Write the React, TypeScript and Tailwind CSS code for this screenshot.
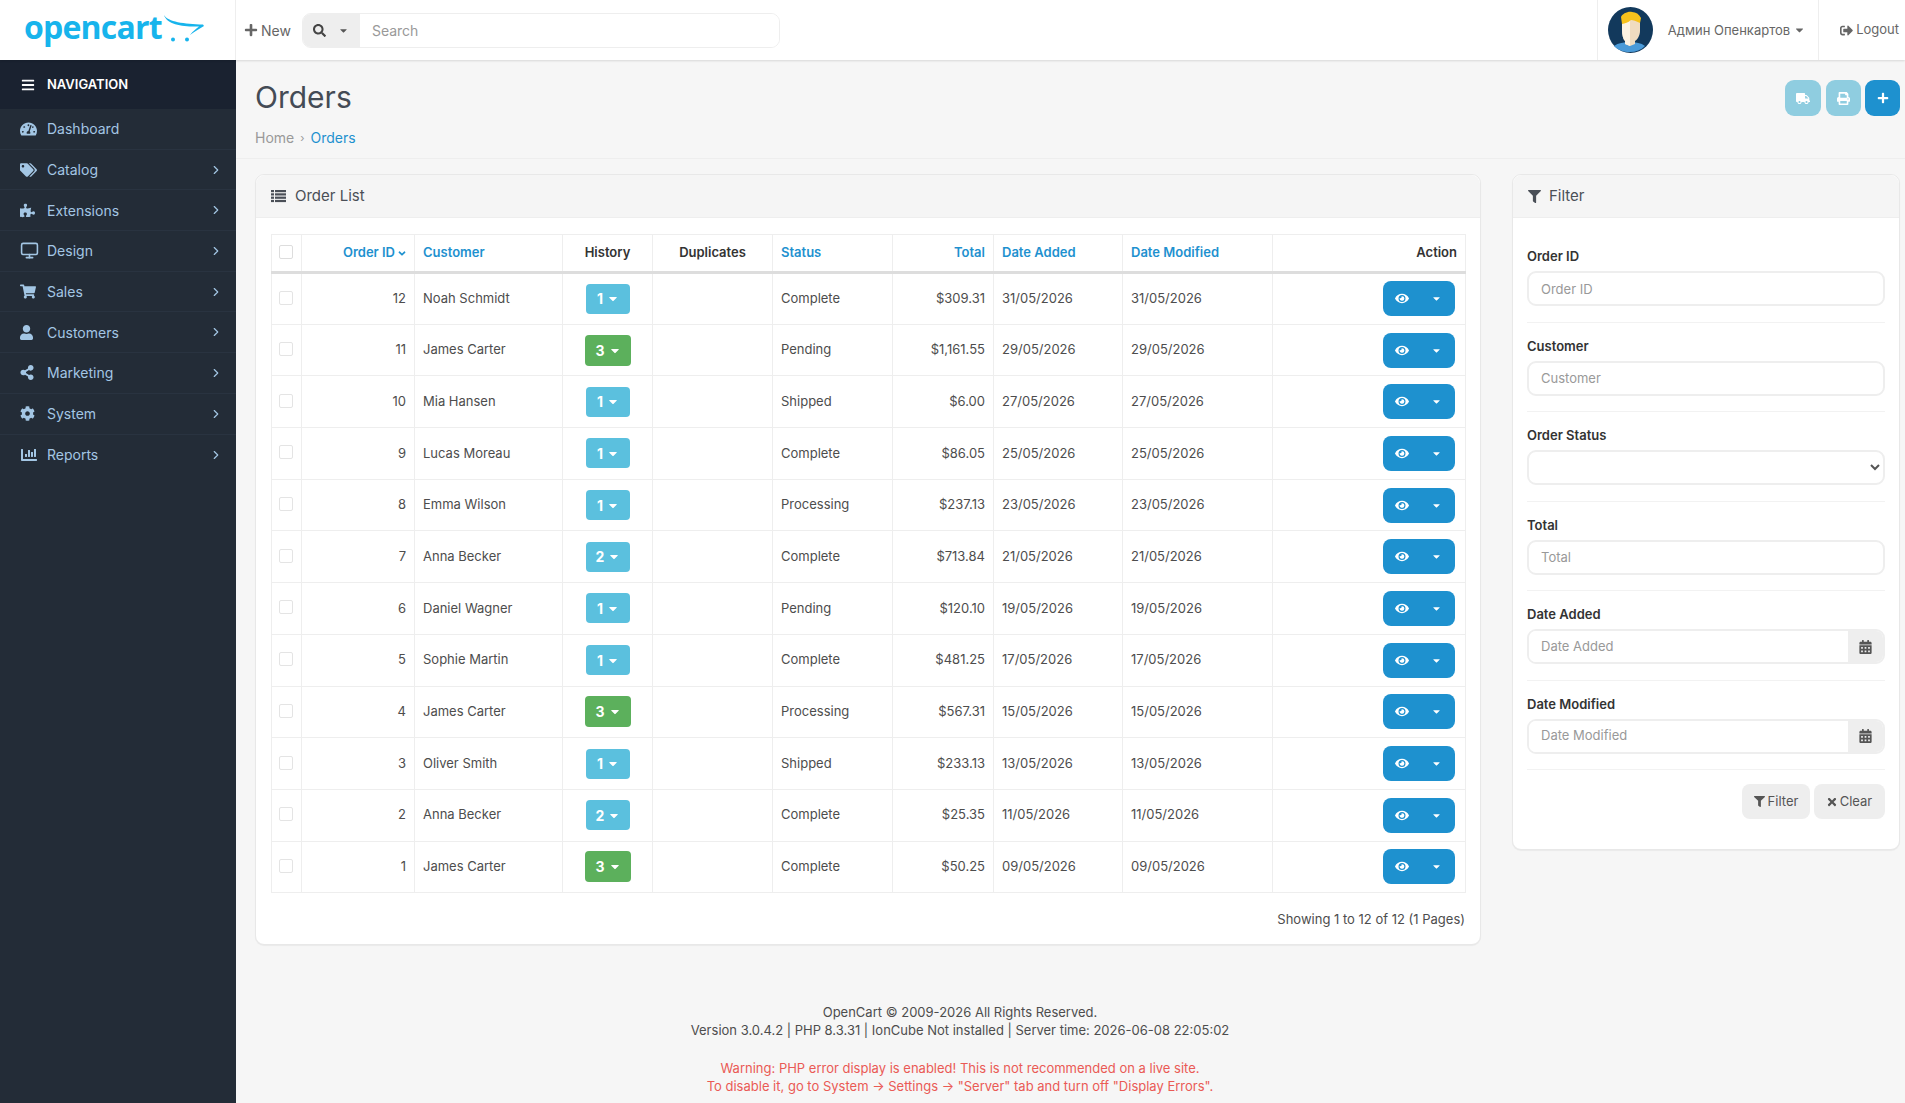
import { ChevronRight, Monitor } from 'lucide-react'
import {
  FaAngleDown,
  FaBars,
  FaCalendarAlt,
  FaCaretDown,
  FaChartBar,
  FaCog,
  FaEye,
  FaFilter,
  FaPlus,
  FaPrint,
  FaPuzzlePiece,
  FaSearch,
  FaShareAlt,
  FaShoppingCart,
  FaSignOutAlt,
  FaTachometerAlt,
  FaTags,
  FaTimes,
  FaTruck,
  FaUser,
} from 'react-icons/fa'

const navItems = [
  { label: 'Dashboard', icon: <FaTachometerAlt className="h-[16px] w-[17px]" />, arrow: false },
  { label: 'Catalog', icon: <FaTags className="h-[16px] w-[17px]" />, arrow: true },
  { label: 'Extensions', icon: <FaPuzzlePiece className="h-[15px] w-[15px]" />, arrow: true },
  { label: 'Design', icon: <Monitor className="h-[19px] w-[19px]" strokeWidth={2} />, arrow: true },
  { label: 'Sales', icon: <FaShoppingCart className="h-[15px] w-[16px]" />, arrow: true },
  { label: 'Customers', icon: <FaUser className="h-[15px] w-[13px]" />, arrow: true },
  { label: 'Marketing', icon: <FaShareAlt className="h-[15px] w-[14px]" />, arrow: true },
  { label: 'System', icon: <FaCog className="h-[15px] w-[15px]" />, arrow: true },
  { label: 'Reports', icon: <FaChartBar className="h-[16px] w-[18px]" />, arrow: true },
]

const orders = [
  { id: 12, customer: 'Noah Schmidt', history: 1, status: 'Complete', total: '$309.31', date: '31/05/2026' },
  { id: 11, customer: 'James Carter', history: 3, status: 'Pending', total: '$1,161.55', date: '29/05/2026' },
  { id: 10, customer: 'Mia Hansen', history: 1, status: 'Shipped', total: '$6.00', date: '27/05/2026' },
  { id: 9, customer: 'Lucas Moreau', history: 1, status: 'Complete', total: '$86.05', date: '25/05/2026' },
  { id: 8, customer: 'Emma Wilson', history: 1, status: 'Processing', total: '$237.13', date: '23/05/2026' },
  { id: 7, customer: 'Anna Becker', history: 2, status: 'Complete', total: '$713.84', date: '21/05/2026' },
  { id: 6, customer: 'Daniel Wagner', history: 1, status: 'Pending', total: '$120.10', date: '19/05/2026' },
  { id: 5, customer: 'Sophie Martin', history: 1, status: 'Complete', total: '$481.25', date: '17/05/2026' },
  { id: 4, customer: 'James Carter', history: 3, status: 'Processing', total: '$567.31', date: '15/05/2026' },
  { id: 3, customer: 'Oliver Smith', history: 1, status: 'Shipped', total: '$233.13', date: '13/05/2026' },
  { id: 2, customer: 'Anna Becker', history: 2, status: 'Complete', total: '$25.35', date: '11/05/2026' },
  { id: 1, customer: 'James Carter', history: 3, status: 'Complete', total: '$50.25', date: '09/05/2026' },
]

const filters = [
  { label: 'Order ID', type: 'text' },
  { label: 'Customer', type: 'text' },
  { label: 'Order Status', type: 'select' },
  { label: 'Total', type: 'text' },
  { label: 'Date Added', type: 'date' },
  { label: 'Date Modified', type: 'date' },
]

function ListIcon() {
  return (
    <svg width="15" height="14" viewBox="0 0 15 14" fill="currentColor" className="shrink-0">
      <rect x="0" y="1" width="3" height="2.2" />
      <rect x="4" y="1" width="11" height="2.2" />
      <rect x="0" y="4.3" width="3" height="2.2" />
      <rect x="4" y="4.3" width="11" height="2.2" />
      <rect x="0" y="7.6" width="3" height="2.2" />
      <rect x="4" y="7.6" width="11" height="2.2" />
      <rect x="0" y="10.9" width="3" height="2.2" />
      <rect x="4" y="10.9" width="11" height="2.2" />
    </svg>
  )
}

function Logo() {
  return (
    <div className="flex h-full w-[236px] shrink-0 items-start border-r border-[#eeeeee] pl-[24px]">
      <span className="mt-[5px] w-[138px] text-[32px] leading-[44px] font-bold tracking-[-0.8px] text-[#17b4ec] [font-family:'Open_Sans',sans-serif]">
        opencart
      </span>
      <svg className="mt-[14px] shrink-0" width="44" height="30" viewBox="0 0 44 30">
        <path d="M2 1 C 6 8, 22 10, 41 10.5 L 42 12 C 37 15, 32 18, 28 21 C 31 17, 34 15, 37 12.5 C 22 13, 5 11, 2 1 Z" fill="#17b4ec" />
        <circle cx="11" cy="25.5" r="2" fill="#17b4ec" />
        <circle cx="25" cy="25.5" r="2" fill="#17b4ec" />
      </svg>
    </div>
  )
}

function Avatar() {
  return (
    <svg width="45" height="46" viewBox="0 0 45 46" className="shrink-0">
      <ellipse cx="22.5" cy="23" rx="22.5" ry="23" fill="#12395c" />
      <path d="M6 39 C 10 36, 16 35, 22 35 C 28 35, 33 36, 37 39 C 33 43, 28 45, 22 45 C 15 45, 10 43, 6 39 Z" fill="#4a9ad8" />
      <path d="M14 12 L 32 12 L 32 24 C 32 29, 29 33, 27 34 L 27 37 L 22 39 L 17 37 L 17 34 C 15 32, 14 28, 14 22 Z" fill="#f0dcc0" />
      <path d="M14 12 L 22 12 L 22 39 L 17 37 L 17 34 C 15 32, 14 28, 14 22 Z" fill="#fcf3e4" />
      <path d="M13 10 C 14 7, 20 4, 24 5 C 28 5, 31 7, 33 11 L 32 16 C 28 14, 25 13, 23 13 C 20 16, 17 16, 14 17 Z" fill="#f6c21c" />
    </svg>
  )
}

function Header() {
  return (
    <header className="z-10 flex h-[60px] shrink-0 items-stretch bg-white shadow-[0_1px_2px_rgba(0,0,0,0.12)]">
      <Logo />
      <div className="flex items-center pl-[8px]">
        <FaPlus className="h-[14px] w-[14px] text-[#666666]" />
        <span className="ml-[3px] text-[14px] text-[#666666]">New</span>
      </div>
      <div className="mt-[13px] ml-[11px] flex h-[35px] w-[478px] overflow-hidden rounded-[9px] border border-[#eeeeee]">
        <div className="flex w-[57px] items-center bg-[#eeeeee] pl-[10px] text-[#444444]">
          <FaSearch className="h-[13px] w-[13px]" />
          <FaCaretDown className="ml-[13px] h-[11px] w-[9px] text-[#555555]" />
        </div>
        <input placeholder="Search" className="min-w-0 flex-1 bg-white pl-[12px] text-[14px] outline-none placeholder:text-[#999999]" />
      </div>
      <div className="ml-auto flex items-center border-l border-[#eeeeee] pr-[14px] pl-[10px]">
        <Avatar />
        <span className="mt-[1px] ml-[15px] text-[13px] text-[#666666]">Админ Опенкартов</span>
        <FaCaretDown className="ml-[5px] h-[12px] w-[9px] text-[#666666]" />
      </div>
      <div className="flex items-center border-l border-[#eeeeee] pr-[6px] pl-[21px] text-[#666666]">
        <FaSignOutAlt className="h-[13px] w-[13px]" />
        <span className="ml-[3px] text-[13px]">Logout</span>
      </div>
    </header>
  )
}

function Sidebar() {
  return (
    <nav className="w-[236px] shrink-0 bg-[#232c37]">
      <div className="flex h-[49px] items-center bg-[#1a2230] pl-[21px] text-white">
        <FaBars className="h-[14px] w-[14px]" />
        <span className="ml-[12px] text-[13px] font-semibold">NAVIGATION</span>
      </div>
      {navItems.map((item) => (
        <div key={item.label} className="flex h-[40.7px] items-center border-b border-[#293340] pr-[13px] text-[#a3c6e4] last:border-b-0">
          <span className="flex w-[47px] justify-start pl-[20px]">{item.icon}</span>
          <span className="text-[14px]">{item.label}</span>
          {item.arrow && <ChevronRight className="ml-auto h-[14px] w-[14px]" strokeWidth={2} />}
        </div>
      ))}
    </nav>
  )
}

function OrderTable() {
  const th = 'border border-[#eeeeee] px-[8px] text-[13px] font-semibold'
  const td = 'border border-[#eeeeee] px-[8px] text-[13px] text-[#4d4d4d]'
  return (
    <table className="w-[1194px] table-fixed border-collapse">
      <colgroup>
        <col className="w-[30px]" />
        <col className="w-[113px]" />
        <col className="w-[148px]" />
        <col className="w-[90px]" />
        <col className="w-[120px]" />
        <col className="w-[120px]" />
        <col className="w-[101px]" />
        <col className="w-[129px]" />
        <col className="w-[150px]" />
        <col className="w-[193px]" />
      </colgroup>
      <thead>
        <tr className="h-[38px] border-b-[3px] border-[#dddddd]">
          <th className={`${th} pr-0 pl-[7px]`}>
            <div className="-mt-[2px] h-[14px] w-[14px] rounded-[2px] border border-[#dddddd]" />
          </th>
          <th className={`${th} text-right text-[#1e91cf]`}>
            Order ID
            <FaAngleDown className="ml-[3px] inline h-[11px] w-[8px]" />
          </th>
          <th className={`${th} text-left text-[#1e91cf]`}>Customer</th>
          <th className={`${th} text-center text-[#333333]`}>History</th>
          <th className={`${th} text-center text-[#333333]`}>Duplicates</th>
          <th className={`${th} text-left text-[#1e91cf]`}>Status</th>
          <th className={`${th} text-right text-[#1e91cf]`}>Total</th>
          <th className={`${th} text-left text-[#1e91cf]`}>Date Added</th>
          <th className={`${th} text-left text-[#1e91cf]`}>Date Modified</th>
          <th className={`${th} text-right text-[#333333]`}>Action</th>
        </tr>
      </thead>
      <tbody>
        {orders.map((order) => (
          <tr key={order.id} className="h-[51.7px]">
            <td className={`${td} pr-0 pl-[7px]`}>
              <div className="-mt-[2px] h-[14px] w-[14px] rounded-[2px] border border-[#e4e4e4]" />
            </td>
            <td className={`${td} text-right`}>{order.id}</td>
            <td className={td}>{order.customer}</td>
            <td className={`${td} text-center`}>
              <button
                className={
                  order.history === 3
                    ? 'inline-flex h-[31px] w-[46px] items-center justify-center rounded-[4px] bg-[#5cb05c] text-[14px] font-bold text-white'
                    : 'inline-flex h-[30px] w-[44px] items-center justify-center rounded-[4px] bg-[#5bc0de] text-[14px] font-bold text-white'
                }
              >
                {order.history}
                <FaCaretDown className="ml-[5px] h-[13px] w-[10px]" />
              </button>
            </td>
            <td className={td} />
            <td className={td}>{order.status}</td>
            <td className={`${td} text-right`}>{order.total}</td>
            <td className={td}>{order.date}</td>
            <td className={td}>{order.date}</td>
            <td className={`${td} pr-[10px] text-right`}>
              <button className="inline-flex h-[35px] w-[72px] items-center rounded-[8px] bg-[#1e91cf] text-white">
                <FaEye className="ml-[12px] h-[13px] w-[14px]" />
                <FaCaretDown className="ml-[23px] h-[11px] w-[9px]" />
              </button>
            </td>
          </tr>
        ))}
      </tbody>
    </table>
  )
}

function FilterPanel() {
  const inputCls =
    'h-[35px] min-w-0 rounded-[9px] border-2 border-[#eeeeee] bg-white px-[12px] text-[13px] outline-none placeholder:text-[#999999]'
  return (
    <section className="h-[676px] w-[388px] shrink-0 rounded-[9px] border border-[#e8e8e8] bg-white shadow-[0_1px_1px_rgba(0,0,0,0.05)]">
      <div className="flex h-[43px] items-center rounded-t-[9px] border-b border-[#eeeeee] bg-[#f5f5f5] pl-[15px] text-[#4a4f57]">
        <FaFilter className="h-[13px] w-[13px]" />
        <span className="ml-[8px] text-[15px]">Filter</span>
      </div>
      <div className="px-[14px] pt-[15px]">
        {filters.map((filter) => (
          <div key={filter.label} className="flex flex-col border-b border-[#f2f2f2] pt-[14px] pb-[15.5px]">
            <label className="mb-[6px] h-[18px] text-[13px] leading-[18px] font-semibold text-[#333333]">{filter.label}</label>
            {filter.type === 'text' && <input placeholder={filter.label} className={inputCls} />}
            {filter.type === 'select' && <select className={`${inputCls} w-full text-[#555555]`} />}
            {filter.type === 'date' && (
              <div className="flex h-[35px] overflow-hidden rounded-[9px] border-2 border-[#eeeeee]">
                <input placeholder={filter.label} className="min-w-0 flex-1 bg-white px-[12px] text-[13px] outline-none placeholder:text-[#999999]" />
                <div className="flex w-[35px] items-center justify-center bg-[#eeeeee] text-[#555555]">
                  <FaCalendarAlt className="h-[14px] w-[13px]" />
                </div>
              </div>
            )}
          </div>
        ))}
        <div className="mt-[14px] flex justify-end gap-[4px] text-[13px] text-[#555555]">
          <button className="flex h-[35px] w-[68px] items-center justify-center gap-[3px] rounded-[8px] bg-[#eeeeee]">
            <FaFilter className="h-[11px] w-[11px]" />
            Filter
          </button>
          <button className="flex h-[35px] w-[71px] items-center justify-center gap-[3px] rounded-[8px] bg-[#eeeeee]">
            <FaTimes className="h-[12px] w-[10px]" />
            Clear
          </button>
        </div>
      </div>
    </section>
  )
}

export default function App() {
  return (
    <div className="flex h-[1103px] w-full flex-col overflow-hidden bg-[#f6f6f6] [font-family:Inter,sans-serif]">
      <Header />
      <div className="flex min-h-0 flex-1">
        <Sidebar />
        <main className="min-w-0 flex-1">
          {/* Page heading */}
          <div className="flex h-[99px] border-b border-[#eeeeee] pr-[5px] pl-[19px]">
            <div>
              <h1 className="mt-[19px] text-[30px] leading-[36px] text-[#444b55]">Orders</h1>
              <div className="mt-[13px] flex items-center text-[14px] leading-[20px] text-[#999999]">
                Home
                <span className="mx-[6px] text-[11px]">›</span>
                <span className="text-[#1e91cf]">Orders</span>
              </div>
            </div>
            <div className="ml-auto mt-[20px] flex gap-[4px] text-white">
              <button className="mr-[1px] flex h-[36px] w-[36px] items-center justify-center rounded-[9px] bg-[#8fcde0]">
                <FaTruck className="h-[13px] w-[14px]" />
              </button>
              <button className="flex h-[36px] w-[35px] items-center justify-center rounded-[9px] bg-[#8fcde0]">
                <FaPrint className="h-[13px] w-[13px]" />
              </button>
              <button className="flex h-[36px] w-[35px] items-center justify-center rounded-[9px] bg-[#1e91cf]">
                <FaPlus className="h-[12px] w-[12px]" />
              </button>
            </div>
          </div>

          {/* Panels */}
          <div className="mt-[15px] flex gap-[31px] pl-[19px]">
            <section className="h-[771px] w-[1226px] shrink-0 rounded-[9px] border border-[#e8e8e8] bg-white shadow-[0_1px_1px_rgba(0,0,0,0.05)]">
              <div className="flex h-[43px] items-center rounded-t-[9px] border-b border-[#eeeeee] bg-[#f5f5f5] pl-[15px] text-[#4a4f57]">
                <ListIcon />
                <span className="ml-[9px] text-[15px]">Order List</span>
              </div>
              <div className="px-[15px] pt-[16px]">
                <OrderTable />
                <p className="mt-[17px] text-right text-[13px] text-[#4d4d4d]">Showing 1 to 12 of 12 (1 Pages)</p>
              </div>
            </section>
            <FilterPanel />
          </div>

          {/* Footer */}
          <footer className="mt-[58px] -ml-[221px] text-center text-[13px] leading-[18px] text-[#4d4d4d]">
            <p>OpenCart © 2009-2026 All Rights Reserved.</p>
            <p>Version 3.0.4.2 | PHP 8.3.31 | IonCube Not installed | Server time: 2026-06-08 22:05:02</p>
            <p className="mt-[20px] text-[#ea5a55]">Warning: PHP error display is enabled! This is not recommended on a live site.</p>
            <p className="text-[#ea5a55]">To disable it, go to System → Settings → "Server" tab and turn off "Display Errors".</p>
          </footer>
        </main>
      </div>
    </div>
  )
}
